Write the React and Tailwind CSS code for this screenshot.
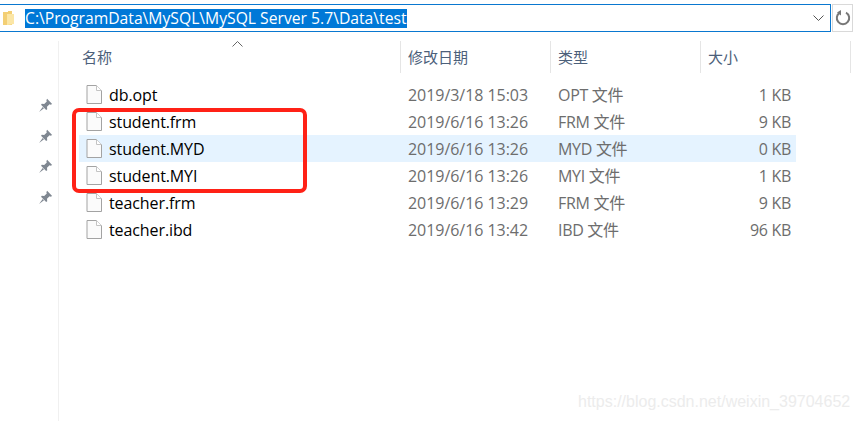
const rows = [
  ["db.opt", "2019/3/18 15:03", "OPT 文件", "1 KB", false],
  ["student.frm", "2019/6/16 13:26", "FRM 文件", "9 KB", false],
  ["student.MYD", "2019/6/16 13:26", "MYD 文件", "0 KB", true],
  ["student.MYI", "2019/6/16 13:26", "MYI 文件", "1 KB", false],
  ["teacher.frm", "2019/6/16 13:29", "FRM 文件", "9 KB", false],
  ["teacher.ibd", "2019/6/16 13:42", "IBD 文件", "96 KB", false],
];

function FileIcon() {
  return (
    <svg width="16" height="19" viewBox="0 0 16 19" className="shrink-0">
      <path d="M1 .5H10.5L15.5 5.5V18.5H1Z" fill="#fbfbfb" stroke="#a3a3a3" />
      <path d="M10.5 .5V5.5H15.5" fill="#fff" stroke="#c4c4c4" />
    </svg>
  );
}

function Pin() {
  return (
    <svg width="15" height="15" viewBox="0 0 14 14">
      <path d="M8.5 .8 13.2 5.5 11.8 6.2 10.8 5.8 8.4 8.2 8.6 10.4 7.6 11.2 2.8 6.4 3.6 5.4 5.8 5.6 8.2 3.2 7.8 2.2Z" fill="#7f8791" />
      <path d="M4.4 8.4 1 13 5.6 9.6Z" fill="#7f8791" />
    </svg>
  );
}

function Folder() {
  return (
    <svg width="12" height="16" viewBox="0 0 12 16">
      <path d="M0 2H5V1H9V15H0Z" fill="#f3cf74" />
      <path d="M4 4H11V14L4 15Z" fill="#fbe6a6" />
    </svg>
  );
}

export default function App() {
  const font = { fontFamily: '"Open Sans","Noto Sans CJK SC",sans-serif' };
  return (
    <div className="relative w-[859px] h-[421px] overflow-hidden bg-white pt-1" style={font}>
      <div className="flex h-[28px] pr-[6px]">
        <div className="flex-1 flex items-center border-y-[1.5px] border-r-[1.5px] border-[#0a78d0] pl-[3px] pr-[6px]">
          <Folder />
          <span className="ml-[10px] bg-[#0078d7] text-white text-[15.7px] leading-[19px] h-[19px] w-[382px] whitespace-nowrap">C:\ProgramData\MySQL\MySQL Server 5.7\Data\test</span>
          <svg width="11" height="6" viewBox="0 0 11 6" className="ml-auto">
            <path d="M.5.5 5.5 5.5 10.5.5" fill="none" stroke="#555" />
          </svg>
        </div>
        <div className="w-[21px] ml-px flex items-center justify-center border border-[#d9d9d9]">
          <svg width="16" height="16" viewBox="0 0 16 16">
            <path d="M5 2.6A6.2 6.2 0 1 0 11 2.6" fill="none" stroke="#777" strokeWidth="2" />
            <path d="M5.8 0 5.8 5.4 1.8 2.6Z" fill="#777" transform="translate(.2 0)" />
          </svg>
        </div>
      </div>

      <div className="flex mt-[9px] h-[380px]">
        <div className="w-[59px] border-r border-[#f0f0f0] flex flex-col items-start pt-[57px] gap-[15.5px] pl-[38px] shrink-0">
          <Pin /><Pin /><Pin /><Pin />
        </div>
        <div className="flex-1 pl-5">
          <div className="flex h-[32px] text-[15px] text-[#4c607a] relative">
            <div className="w-[322px] pl-[3px] flex items-center border-r border-[#e5e5e5]">名称</div>
            <div className="w-[150px] pl-[7px] flex items-center border-r border-[#e5e5e5]">修改日期</div>
            <div className="w-[150px] pl-[7px] flex items-center border-r border-[#e5e5e5]">类型</div>
            <div className="w-[150px] pl-[7px] flex items-center border-r border-[#e5e5e5]">大小</div>
            <svg width="11" height="6" viewBox="0 0 11 6" className="absolute left-[153px] top-[0px]">
              <path d="M.5 5.5 5.5.5 10.5 5.5" fill="none" stroke="#666" />
            </svg>
          </div>
          <div className="mt-[8px]">
            {rows.map(([name, date, type, size, hl]) => (
              <div key={name} className={`flex items-center h-[27px] w-[717px] ${hl ? "bg-[#e5f3ff]" : ""}`}>
                <div className="w-[321px] pl-[7px] flex items-center gap-[7px]">
                  <FileIcon />
                  <span className="text-[16px] text-black tracking-[-0.1px]">{name}</span>
                </div>
                <div className="w-[150px] pl-[8px] text-[16px] text-[#6d6d6d] tracking-[-0.05px]">{date}</div>
                <div className="w-[100px] pl-[8px] text-[16px] text-[#6d6d6d] tracking-[-0.3px]">{type}</div>
                <div className="w-[141px] text-right text-[16px] text-[#6d6d6d] tracking-[-0.3px]">{size}</div>
              </div>
            ))}
          </div>
        </div>
      </div>

      <div className="absolute left-[72px] top-[108px] w-[235px] h-[85px] border-[4px] border-[#ff2116] rounded-[7px]" />
      <div className="absolute left-[578px] top-[392px] text-[16px] leading-[20px] text-[#ececec] whitespace-nowrap" style={{ fontFamily: '"Liberation Sans",sans-serif' }}>https://blog.csdn.net/weixin_39704652</div>
    </div>
  );
}
